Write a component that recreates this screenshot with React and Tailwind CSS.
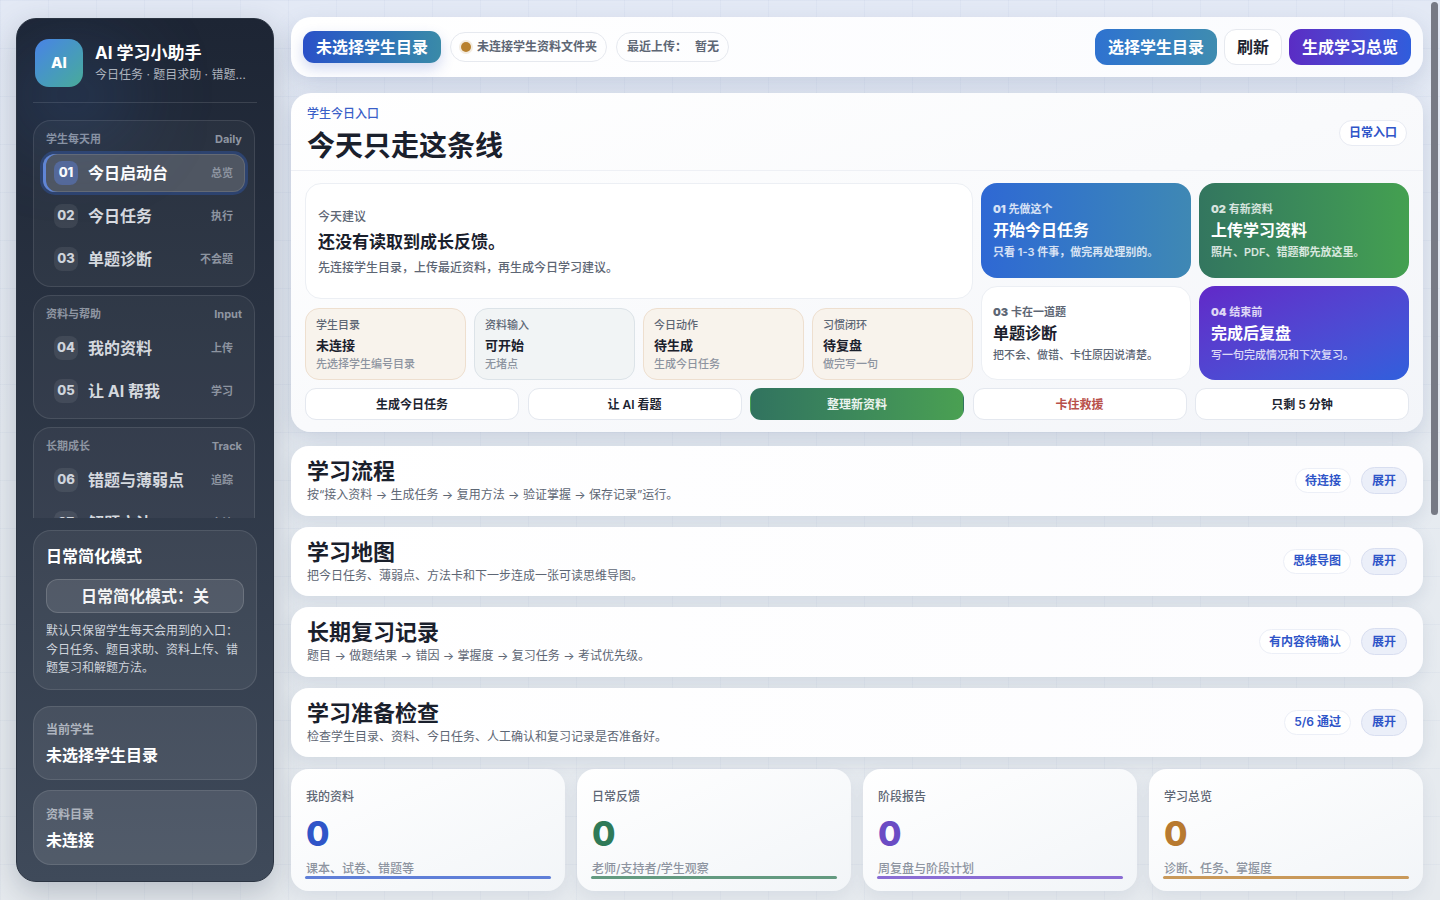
const navGroups = [
  {
    title: '学生每天用', tag: 'Daily',
    items: [
      { no: '01', label: '今日启动台', hint: '总览', active: true },
      { no: '02', label: '今日任务', hint: '执行' },
      { no: '03', label: '单题诊断', hint: '不会题' },
    ],
  },
  {
    title: '资料与帮助', tag: 'Input',
    items: [
      { no: '04', label: '我的资料', hint: '上传' },
      { no: '05', label: '让 AI 帮我', hint: '学习' },
    ],
  },
  {
    title: '长期成长', tag: 'Track',
    items: [
      { no: '06', label: '错题与薄弱点', hint: '追踪' },
      { no: '07', label: '解题方法', hint: '方法' },
    ],
  },
];

const statusCards = [
  { title: '学生目录', value: '未连接', note: '先选择学生编号目录', warm: true },
  { title: '资料输入', value: '可开始', note: '无堵点', warm: false },
  { title: '今日动作', value: '待生成', note: '生成今日任务', warm: true },
  { title: '习惯闭环', value: '待复盘', note: '做完写一句', warm: true },
];

const quickActions = [
  { label: '生成今日任务', cls: 'bg-white border-[#e4e8ef] text-[#1c2430]' },
  { label: '让 AI 看题', cls: 'bg-white border-[#e4e8ef] text-[#1c2430]' },
  { label: '整理新资料', cls: 'bg-gradient-to-r from-[#31735f] to-[#4aa052] border-transparent text-white/90' },
  { label: '卡住救援', cls: 'bg-white border-[#e4e8ef] text-[#b8504a]' },
  { label: '只剩 5 分钟', cls: 'bg-white border-[#e4e8ef] text-[#1c2430]' },
];

const sections = [
  { title: '学习流程', desc: '按“接入资料 → 生成任务 → 复用方法 → 验证掌握 → 保存记录”运行。', tag: '待连接' },
  { title: '学习地图', desc: '把今日任务、薄弱点、方法卡和下一步连成一张可读思维导图。', tag: '思维导图' },
  { title: '长期复习记录', desc: '题目 → 做题结果 → 错因 → 掌握度 → 复习任务 → 考试优先级。', tag: '有内容待确认' },
  { title: '学习准备检查', desc: '检查学生目录、资料、今日任务、人工确认和复习记录是否准备好。', tag: '5/6 通过' },
];

const stats = [
  { title: '我的资料', note: '课本、试卷、错题等', num: 'text-[#2f55c8]', bar: 'bg-[#5f7fd8]' },
  { title: '日常反馈', note: '老师/支持者/学生观察', num: 'text-[#2f7a58]', bar: 'bg-[#639a80]' },
  { title: '阶段报告', note: '周复盘与阶段计划', num: 'text-[#6a4cc4]', bar: 'bg-[#8a6cd4]' },
  { title: '学习总览', note: '诊断、任务、掌握度', num: 'text-[#b87a30]', bar: 'bg-[#c9995a]' },
];

function NavItem({ item }) {
  return (
    <div className={`flex h-[38px] items-center rounded-[12px] pl-[11px] pr-3 ${item.active ? 'bg-[#4f5662] shadow-[inset_3px_0_0_#6186d6,inset_0_0_0_1px_rgba(255,255,255,.12),0_0_0_3px_#2d436f]' : ''}`}>
      <span className={`flex h-6 w-6 shrink-0 items-center justify-center rounded-lg text-[13px] font-extrabold ${item.active ? 'bg-[#55699a] text-white' : 'bg-white/8 text-[#cfd4dc]'}`}>
        {item.no}
      </span>
      <span className={`ml-[10px] flex-1 text-[16px] font-bold ${item.active ? 'text-white' : 'text-[#d5d9df]'}`}>{item.label}</span>
      <span className="text-[11px] font-semibold text-[#8d94a0]">{item.hint}</span>
    </div>
  );
}

function Sidebar() {
  return (
    <aside className="my-[18px] ml-4 flex h-[864px] w-[258px] shrink-0 flex-col overflow-hidden rounded-[20px] border border-[#2b3442] bg-gradient-to-b from-[#1d2534] to-[#3f4a5a] px-4 pb-4 pt-5 shadow-[0_10px_30px_rgba(40,55,80,.25)]">
      <div className="relative flex h-[64px] shrink-0 gap-3 border-b border-white/12 pb-4 pl-[2px] pr-[8px]">
        <div className="absolute -left-6 top-2 h-24 w-32 rounded-full bg-[#3a6cc0]/20 blur-2xl" />
        <div className="relative flex h-12 w-12 shrink-0 items-center justify-center rounded-[14px] bg-gradient-to-br from-[#4a82e6] to-[#4aaa98] text-[15px] font-extrabold text-white">
          AI
        </div>
        <div className="relative min-w-0 pt-1">
          <div className="text-[17px] font-bold leading-[20px] text-white">AI 学习小助手</div>
          <div className="mt-1 truncate text-[12px] leading-4 text-[#aeb4be]">今日任务 · 题目求助 · 错题复习</div>
        </div>
      </div>

      <div className="mt-[17px] flex h-[398px] shrink-0 flex-col gap-2 overflow-hidden pr-[2px]">
        {navGroups.map((group) => (
          <div key={group.title} className="shrink-0 rounded-[18px] border border-white/10 bg-white/[.04] px-[9px] pb-2 pt-[11px]">
            <div className="flex h-[14px] items-center justify-between px-[3px] text-[11px] font-bold text-[#8f96a2]">
              <span className="font-semibold">{group.title}</span>
              <span>{group.tag}</span>
            </div>
            <div className="mt-2 flex flex-col gap-[5px]">
              {group.items.map((item) => <NavItem key={item.no} item={item} />)}
            </div>
          </div>
        ))}
      </div>

      <div className="mt-3 h-[160px] shrink-0 rounded-[18px] border border-white/10 bg-white/[.06] px-3 pt-[13px]">
        <div className="text-[16px] font-bold leading-6 text-white">日常简化模式</div>
        <div className="mt-[11px] flex h-[34px] items-center justify-center rounded-[12px] border border-white/15 bg-white/10 text-[16px] font-bold text-white/95">
          日常简化模式：关
        </div>
        <p className="mt-[9px] text-[12px] leading-[18.5px] text-[#cfd4dc]">
          默认只保留学生每天会用到的入口：今日任务、题目求助、资料上传、错题复习和解题方法。
        </p>
      </div>

      <div className="mt-4 h-[74px] shrink-0 rounded-[18px] border border-white/10 bg-white/[.08] px-3 pt-[15px]">
        <div className="text-[12px] font-semibold leading-4 text-[#aeb4be]">当前学生</div>
        <div className="mt-[5px] text-[16px] font-bold leading-6 text-white">未选择学生目录</div>
      </div>
      <div className="mt-[10px] h-[75px] shrink-0 rounded-[18px] border border-white/10 bg-white/[.1] px-3 pt-4">
        <div className="text-[12px] font-semibold leading-4 text-[#aeb4be]">资料目录</div>
        <div className="mt-[5px] text-[16px] font-bold leading-6 text-white">未连接</div>
      </div>
    </aside>
  );
}

function TopBar() {
  return (
    <div className="flex h-[60px] items-center rounded-[20px] bg-gradient-to-r from-white to-[#fafbfe] pl-3 pr-3 shadow-[0_8px_22px_rgba(90,110,150,.2)]">
      <div className="flex h-8 w-[138px] items-center justify-center rounded-[11px] bg-gradient-to-r from-[#2b50c8] to-[#3a8aa8] text-[16px] font-bold text-white shadow-[0_6px_14px_rgba(50,80,190,.22)]">
        未选择学生目录
      </div>
      <div className="ml-[9px] flex h-[30px] w-[157px] items-center rounded-full border border-[#e6e9ef] pl-[10px] text-[12px] font-semibold text-[#5d6674]">
        <span className="mr-[6px] h-[10px] w-[10px] rounded-full bg-[#b8812f] shadow-[0_0_0_2px_rgba(184,129,47,.15)]" />
        未连接学生资料文件夹
      </div>
      <div className="ml-[9px] flex h-[30px] w-[113px] items-center rounded-full border border-[#e6e9ef] pl-[10px] text-[12px] font-semibold text-[#5d6674]">
        最近上传：<span className="ml-[8px]">暂无</span>
      </div>
      <div className="ml-auto flex gap-[7px]">
        <button className="h-9 w-[122px] rounded-[12px] bg-gradient-to-r from-[#2f72d0] to-[#3f8cb0] text-[16px] font-bold text-white">选择学生目录</button>
        <button className="h-9 w-[58px] rounded-[12px] border border-[#e6e9ef] bg-white text-[16px] font-bold text-[#1c2430]">刷新</button>
        <button className="h-9 w-[122px] rounded-[12px] bg-gradient-to-r from-[#5a2cc4] to-[#2f5ddc] text-[16px] font-bold text-white">生成学习总览</button>
      </div>
    </div>
  );
}

function Hero() {
  return (
    <div className="mt-4 rounded-[20px] bg-gradient-to-br from-white to-[#f3f5f9] shadow-[0_8px_22px_rgba(90,110,150,.2)]">
      <div className="flex h-[78px] items-center justify-between border-b border-[#eef0f5] pl-4 pr-4 pt-[2px]">
        <div className="pt-[5px]">
          <div className="text-[12px] font-medium leading-4 text-[#3a5fc8]">学生今日入口</div>
          <div className="mt-[5px] text-[28px] font-bold leading-[38px] text-[#1a202c]">今天只走这条线</div>
        </div>
        <span className="flex h-[26px] w-[68px] items-center justify-center rounded-full border border-[#e8ebf3] bg-white text-[12px] font-semibold text-[#2f55c8]">日常入口</span>
      </div>

      <div className="px-[14px] pb-3 pt-3">
        <div className="flex gap-2">
          <div className="flex w-[668px] shrink-0 flex-col gap-[9px]">
            <div className="flex h-[116px] flex-col justify-center rounded-[16px] border border-[#eceff4] bg-white px-[12px] pt-[2px]">
              <div className="text-[12px] font-medium leading-4 text-[#5d6674]">今天建议</div>
              <div className="mt-[5px] text-[17px] font-bold leading-6 text-[#1a202c]">还没有读取到成长反馈。</div>
              <div className="mt-[6px] text-[12px] font-medium leading-4 text-[#5d6674]">先连接学生目录，上传最近资料，再生成今日学习建议。</div>
            </div>
            <div className="grid grid-cols-4 gap-2">
              {statusCards.map((c) => (
                <div key={c.title} className={`h-[72px] rounded-[14px] border px-[10px] pt-[9px] ${c.warm ? 'border-[#eedfcf] bg-[#f8f3ec]' : 'border-[#dce3e8] bg-[#f1f4f5]'}`}>
                  <div className="text-[11px] font-medium leading-[15px] text-[#5d6674]">{c.title}</div>
                  <div className="mt-[3px] text-[13px] font-bold leading-[18px] text-[#1a202c]">{c.value}</div>
                  <div className="mt-[3px] text-[11px] font-medium leading-[15px] text-[#8d94a0]">{c.note}</div>
                </div>
              ))}
            </div>
          </div>

          <div className="grid flex-1 grid-cols-2 grid-rows-[95px_94px] gap-2">
            <div className="flex flex-col justify-center rounded-[16px] bg-gradient-to-r from-[#2f68d4] to-[#3f88b4] px-[12px] text-white">
              <div className="text-[11px] font-semibold leading-[15px] text-white/80"><b>01</b> 先做这个</div>
              <div className="mt-px text-[16px] font-bold leading-[24px]">开始今日任务</div>
              <div className="mt-[2px] text-[11px] font-semibold leading-[16px] text-white/80">只看 1-3 件事，做完再处理别的。</div>
            </div>
            <div className="flex flex-col justify-center rounded-[16px] bg-gradient-to-r from-[#33765f] to-[#44a050] px-[12px] text-white">
              <div className="text-[11px] font-semibold leading-[15px] text-white/80"><b>02</b> 有新资料</div>
              <div className="mt-px text-[16px] font-bold leading-[24px]">上传学习资料</div>
              <div className="mt-[2px] text-[11px] font-semibold leading-[16px] text-white/80">照片、PDF、错题都先放这里。</div>
            </div>
            <div className="flex flex-col justify-center rounded-[16px] border border-[#eceff4] bg-white px-[11px] pt-px text-[#1a202c]">
              <div className="text-[11px] font-semibold leading-[15px] text-[#5d6674]"><b>03</b> 卡在一道题</div>
              <div className="mt-px text-[16px] font-bold leading-[24px]">单题诊断</div>
              <div className="mt-[2px] text-[11px] font-medium leading-[16px] text-[#5d6674]">把不会、做错、卡住原因说清楚。</div>
            </div>
            <div className="flex flex-col justify-center rounded-[16px] bg-gradient-to-br from-[#6128c8] to-[#2f5fdc] px-[12px] pt-px text-white">
              <div className="text-[11px] font-semibold leading-[15px] text-white/80"><b>04</b> 结束前</div>
              <div className="mt-px text-[16px] font-bold leading-[24px]">完成后复盘</div>
              <div className="mt-[2px] text-[11px] font-medium leading-[16px] text-white/80">写一句完成情况和下次复习。</div>
            </div>
          </div>
        </div>

        <div className="mt-2 grid grid-cols-5 gap-[8.5px]">
          {quickActions.map((a) => (
            <button key={a.label} className={`h-8 rounded-[11px] border pt-px text-[12px] font-semibold ${a.cls}`}>{a.label}</button>
          ))}
        </div>
      </div>
    </div>
  );
}

function SectionRow({ s }) {
  return (
    <div className="flex h-[69.5px] items-center justify-between rounded-[18px] bg-gradient-to-r from-white to-[#fcfcfe] pl-4 pr-4 shadow-[0_6px_16px_rgba(90,110,150,.14)]">
      <div className="pb-px">
        <div className="text-[22px] font-bold leading-[28px] text-[#1a202c]">{s.title}</div>
        <div className="mt-[2px] text-[12px] leading-4 text-[#5d6674]">{s.desc}</div>
      </div>
      <div className="flex items-center gap-[10px]">
        <span className="flex h-[25px] items-center rounded-full border border-[#eceff7] bg-white px-[9px] text-[12px] font-semibold text-[#2f55c8]">{s.tag}</span>
        <button className="h-[27px] w-[46px] rounded-full border border-[#d8def0] bg-[#ebeff9] text-[12px] font-semibold text-[#2f55c8]">展开</button>
      </div>
    </div>
  );
}

function StatCard({ s }) {
  return (
    <div className="h-[122px] rounded-[18px] bg-gradient-to-br from-white to-[#f2f5f8] px-[14px] pt-5 shadow-[0_6px_16px_rgba(90,110,150,.1)]">
      <div className="pl-px text-[12px] font-medium leading-4 text-[#5d6674]">{s.title}</div>
      <div className={`mt-[9px] pl-px text-[34px] font-extrabold leading-[40px] ${s.num}`}>0</div>
      <div className="mt-2 pl-px text-[12px] font-medium leading-[14px] text-[#8d94a0]">{s.note}</div>
      <div className={`h-[3px] rounded-full ${s.bar}`} />
    </div>
  );
}

export default function App() {
  return (
    <div className="flex h-screen overflow-hidden bg-[linear-gradient(rgba(110,130,175,.05)_1px,transparent_1px),linear-gradient(90deg,rgba(110,130,175,.05)_1px,transparent_1px),linear-gradient(180deg,#e3e9f5,#e6ebf1_50%,#e6eaee)] bg-[size:48px_48px,48px_48px,100%_100%] font-['Inter','Noto_Sans_CJK_SC',sans-serif]">
      <Sidebar />
      <main className="relative h-screen flex-1 overflow-hidden pl-[17px] pr-[17px] pt-[17px]">
        <TopBar />
        <Hero />
        <div className="mt-[14px] flex flex-col gap-[11px]">
          {sections.map((s) => <SectionRow key={s.title} s={s} />)}
        </div>
        <div className="mt-3 grid grid-cols-4 gap-3">
          {stats.map((s) => <StatCard key={s.title} s={s} />)}
        </div>
        {/* scrollbar thumb, the headless browser hides the real one */}
        <div className="absolute right-[2px] top-[2px] h-[513px] w-[7px] rounded-[4px] bg-[#777a85]" />
      </main>
    </div>
  );
}
